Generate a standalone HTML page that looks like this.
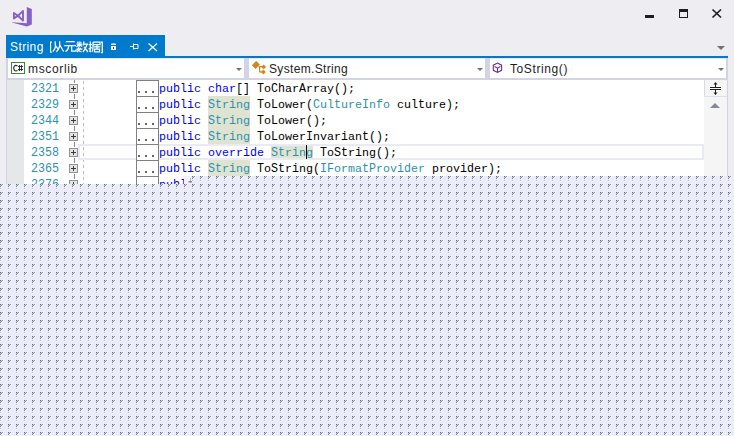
<!DOCTYPE html>
<html><head><meta charset="utf-8">
<style>
*{margin:0;padding:0;box-sizing:border-box}
html,body{width:734px;height:436px;overflow:hidden;background:#EEEEF2;font-family:"Liberation Sans",sans-serif}
.a{position:absolute}
.ui{font-family:"Liberation Sans",sans-serif;font-size:12px;line-height:14px;white-space:pre}
.code{font-family:"Liberation Mono",monospace;font-size:11.67px;line-height:16px;height:16px;white-space:pre;color:#000;}
.u{display:inline-block;font-weight:normal;transform:scaleY(1.03);transform-origin:0 11px}
.k{color:#0000FF}
.t{color:#2B91AF}
.ln{font-family:"Liberation Mono",monospace;font-size:11.67px;line-height:16px;height:16px;white-space:pre;color:#2B91AF;transform:scaleY(1.1);transform-origin:0 11px}
.ob{width:9px;height:9px;border:1px solid #919191;background:#E5E5E5}
.ob:before{content:"";position:absolute;left:1px;top:3px;width:5px;height:1px;background:#3A3A3A}
.ob:after{content:"";position:absolute;left:3px;top:1px;width:1px;height:5px;background:#3A3A3A}
.dots{width:23px;height:17px;border:1px solid #808080;background:#fff}
.dots i{position:absolute;top:10px;width:2px;height:2px;background:#666}
</style></head><body>
<!-- VS logo -->
<svg class="a" style="left:0;top:0" width="40" height="32">
<path d="M13.9,13 L18,15.7 L23,10.9 L23,20.6 L18,15.7 L13.9,18.4 Z" fill="none" stroke="#8661C5" stroke-width="1.9" stroke-linejoin="round"/>
<path d="M26.8,6.9 L31.8,9.1 L31.8,24.6 L26.8,26.4 L11.9,22.6 L12.2,22.3 L26.8,23.2 Z" fill="#8661C5"/>
</svg>
<!-- window buttons -->
<div class="a" style="left:645px;top:15px;width:9px;height:3px;background:#1E1E1E"></div>
<div class="a" style="left:679px;top:9px;width:9px;height:9px;border:1px solid #1E1E1E;border-top-width:3px"></div>
<svg class="a" style="left:710px;top:7px" width="14" height="12"><path d="M2.5,2.5 L11,10.5 M11,2.5 L2.5,10.5" stroke="#1E1E1E" stroke-width="1.7"/></svg>

<!-- tab -->
<div class="a" style="left:6px;top:35px;width:159px;height:21px;background:#007ACC"></div>
<div class="a ui" style="left:10px;top:40px;color:#fff;letter-spacing:0.4px">String</div>
<svg class="a" style="left:50px;top:39px" width="54" height="16" fill="none" stroke="#fff" stroke-width="1.25">
<path d="M1.8,3 L0.5,3 L0.5,13 L1.8,13"/>
<path d="M5.1,2.2 L5.4,8 Q4.6,11 2.8,12.5 M5.4,6.5 L7.9,9.9 M9.7,2.2 L9.7,7 Q8.7,10.5 6.4,12.8 M9.8,6 L13.6,12.5"/>
<path d="M15.8,2.6 L24.8,2.6 M14.3,6.6 L26,6.6 M18.75,6.6 Q18.5,11 15.4,12.5 M21.7,6.6 L21.7,12 L26,12 L26,10.5"/>
<path d="M29.2,2.5 L29.2,8 M26.5,5.2 L32,5.2 M27.2,2.8 L28,4 M31.2,2.8 L30.4,4 M29,5.5 L26.5,8 M29.4,5.5 L32,7.5 M26.5,10.2 L32.5,10.2 M29,8.2 L27.5,11 L31.5,13 M30.8,9 L27,13 M34,2.5 L33,6.5 M33.5,5 L38,5 M37,5.5 Q35.5,10 33,13 M34,8 L38,13"/>
<path d="M38.6,5.5 L42,5.5 M40.3,2.5 L40.3,12.5 L39.3,12 M38.6,10 L42,8.5 M43,3 L50,3 L50,5.5 L43,5.5 M43,3 L43,8 Q43,11 42,13 M44,7.8 L50.3,7.8 M47,5.5 L47,10 M44.5,10 L49.5,10 L49.5,12.8 L44.5,12.8 Z"/>
<path d="M51,3.2 L52.3,3.2 L52.3,13.5 L51,13.5"/>
</svg>
<!-- lock icon -->
<svg class="a" style="left:110px;top:43px" width="8" height="8"><path d="M1,2 L1,0.8 Q3.5,-0.3 6,0.8 L6,2 Z" fill="#F4E6CC"/><rect x="1" y="3" width="5" height="4" fill="#FAF2E2"/><rect x="3" y="4" width="1" height="2" fill="#2A3FB0"/></svg>
<!-- pin icon -->
<svg class="a" style="left:130px;top:43px" width="10" height="8" fill="none" stroke="#fff" stroke-width="1"><path d="M0,3.5 L3.5,3.5 M3.5,0.5 L3.5,6.5 M3.5,1.5 L8,1.5 L8,5.5 L3.5,5.5" /></svg>
<!-- close icon -->
<svg class="a" style="left:147px;top:42px" width="12" height="10"><path d="M1.5,1.5 L10,9 M10,1.5 L1.5,9" stroke="#fff" stroke-width="1.2"/></svg>
<!-- tab dropdown arrow -->
<svg class="a" style="left:716px;top:45px" width="10" height="6"><path d="M1,1 L9,1 L5,5 Z" fill="#717171"/></svg>
<!-- blue line -->
<div class="a" style="left:6px;top:56px;width:722px;height:2px;background:#007ACC"></div>

<!-- nav bar -->
<div class="a" style="left:6px;top:58px;width:722px;height:22px;background:#D3D4E3"></div>
<div class="a" style="left:8px;top:58px;width:236px;height:20px;background:#fff;border-top:1px solid #E8E8EE"></div>
<div class="a" style="left:249px;top:58px;width:236px;height:20px;background:#fff;border-top:1px solid #E8E8EE"></div>
<div class="a" style="left:490px;top:58px;width:236px;height:20px;background:#fff;border-top:1px solid #E8E8EE"></div>
<!-- c# icon -->
<div class="a" style="left:11px;top:62px;width:14px;height:12px;border:1px solid #388A34;background:#fff"></div>
<svg class="a" style="left:0;top:54px" width="30" height="24" fill="none" stroke="#333" stroke-width="1.1"><path d="M17.4,12.2 A2.2,2.8 0 1 0 17.4,16.2" stroke-width="1.2"/><path d="M19.5,11 L19.5,17 M21.5,11 L21.5,17 M18,12.5 L23,12.5 M18,15.5 L23,15.5" stroke-width="1"/></svg>
<div class="a ui" style="left:28px;top:62px;color:#1E1E1E;letter-spacing:0.65px">mscorlib</div>
<svg class="a" style="left:235px;top:67px" width="8" height="5"><path d="M1,1 L7,1 L4,4 Z" fill="#717171"/></svg>
<!-- class icon -->
<svg class="a" style="left:249px;top:58px" width="20" height="20"><g fill="#D4861A"><path d="M7.2,2.9 L10.9,6.6 L6.6,10.9 L2.9,7.2 Z"/><path d="M14.7,6.5 L17.1,8.9 L14.7,11.3 L12.3,8.9 Z"/><path d="M14.4,11.6 L16.8,14 L14.4,16.4 L12,14 Z"/></g><path d="M9.5,8.7 L13.5,8.7 M10.6,8.7 L10.6,13.8 L13.5,13.8" fill="none" stroke="#D4861A" stroke-width="1.2"/></svg>
<div class="a ui" style="left:269px;top:62px;color:#1E1E1E;letter-spacing:0.33px">System.String</div>
<svg class="a" style="left:476px;top:67px" width="8" height="5"><path d="M1,1 L7,1 L4,4 Z" fill="#717171"/></svg>
<!-- method icon -->
<svg class="a" style="left:492px;top:62px" width="12" height="12" fill="none" stroke="#6A2C91" stroke-width="1.1"><path d="M5.5,1 L9.6,3.2 L9.6,8.3 L5.5,10.5 L1.3,8.3 L1.3,3.2 Z M2.6,4.5 L5.5,6.2 L8.4,4.5 M5.5,6.2 L5.5,10.5"/></svg>
<div class="a ui" style="left:510px;top:62px;color:#1E1E1E;letter-spacing:0.6px">ToString()</div>
<svg class="a" style="left:717px;top:67px" width="8" height="5"><path d="M1,1 L7,1 L4,4 Z" fill="#717171"/></svg>

<!-- code area -->
<div class="a" style="left:6px;top:80px;width:698px;height:356px;background:#fff"></div>
<div class="a" style="left:6px;top:80px;width:1px;height:356px;background:#D3D4E3"></div>
<div class="a" style="left:7px;top:80px;width:17px;height:356px;background:#E6E7E8"></div>
<!-- outlining lines -->
<div class="a" style="left:74px;top:80px;width:1px;height:3px;background:#8C8C8C"></div>
<div class="a" style="left:74px;top:94px;width:1px;height:5px;background:#8C8C8C"></div>
<div class="a" style="left:74px;top:110px;width:1px;height:5px;background:#8C8C8C"></div>
<div class="a" style="left:74px;top:126px;width:1px;height:5px;background:#8C8C8C"></div>
<div class="a" style="left:74px;top:142px;width:1px;height:5px;background:#8C8C8C"></div>
<div class="a" style="left:74px;top:158px;width:1px;height:5px;background:#8C8C8C"></div>
<div class="a" style="left:74px;top:174px;width:1px;height:5px;background:#8C8C8C"></div>
<div class="a" style="left:83px;top:80px;width:1px;height:112px;background:repeating-linear-gradient(to bottom,transparent 0,transparent 1px,#BEBEBE 1px,#BEBEBE 4px,transparent 4px,transparent 6px)"></div>

<div class="a" style="left:208px;top:96px;width:42px;height:16px;background:#DFE3D1"></div>
<div class="a" style="left:208px;top:112px;width:42px;height:16px;background:#DFE3D1"></div>
<div class="a" style="left:208px;top:128px;width:42px;height:16px;background:#DFE3D1"></div>
<div class="a" style="left:271px;top:144px;width:42px;height:16px;background:#DFE3D1"></div>
<div class="a" style="left:208px;top:160px;width:42px;height:16px;background:#DFE3D1"></div>
<div class="a" style="left:208px;top:176px;width:42px;height:16px;background:#DFE3D1"></div>
<div class="a" style="left:78px;top:144px;width:626px;height:16px;border:2px solid #EAEAF2"></div>
<div class="a code" style="left:159px;top:81px"><span class="k">pu<b class="u">b</b><b class="u">l</b><b class="u">i</b>c</span> <span class="k">c<b class="u">h</b>ar</span><b class="u">[</b><b class="u">]</b> <b class="u">T</b>o<b class="u">C</b><b class="u">h</b>ar<b class="u">A</b>rray<b class="u">(</b><b class="u">)</b>;</div>
<div class="a ln" style="left:31px;top:81px">2321</div>
<div class="a ob" style="left:69px;top:84px"></div>
<div class="a dots" style="left:136px;top:80px"><i style="left:1px"></i><i style="left:8px"></i><i style="left:15px"></i></div>
<div class="a code" style="left:159px;top:97px"><span class="k">pu<b class="u">b</b><b class="u">l</b><b class="u">i</b>c</span> <span class="t"><b class="u">S</b><b class="u">t</b>r<b class="u">i</b>ng</span> <b class="u">T</b>o<b class="u">L</b>ower<b class="u">(</b><span class="t"><b class="u">C</b>u<b class="u">l</b><b class="u">t</b>ure<b class="u">I</b>n<b class="u">f</b>o</span> cu<b class="u">l</b><b class="u">t</b>ure<b class="u">)</b>;</div>
<div class="a ln" style="left:31px;top:97px">2329</div>
<div class="a ob" style="left:69px;top:100px"></div>
<div class="a dots" style="left:136px;top:96px"><i style="left:1px"></i><i style="left:8px"></i><i style="left:15px"></i></div>
<div class="a code" style="left:159px;top:113px"><span class="k">pu<b class="u">b</b><b class="u">l</b><b class="u">i</b>c</span> <span class="t"><b class="u">S</b><b class="u">t</b>r<b class="u">i</b>ng</span> <b class="u">T</b>o<b class="u">L</b>ower<b class="u">(</b><b class="u">)</b>;</div>
<div class="a ln" style="left:31px;top:113px">2344</div>
<div class="a ob" style="left:69px;top:116px"></div>
<div class="a dots" style="left:136px;top:112px"><i style="left:1px"></i><i style="left:8px"></i><i style="left:15px"></i></div>
<div class="a code" style="left:159px;top:129px"><span class="k">pu<b class="u">b</b><b class="u">l</b><b class="u">i</b>c</span> <span class="t"><b class="u">S</b><b class="u">t</b>r<b class="u">i</b>ng</span> <b class="u">T</b>o<b class="u">L</b>ower<b class="u">I</b>nvar<b class="u">i</b>an<b class="u">t</b><b class="u">(</b><b class="u">)</b>;</div>
<div class="a ln" style="left:31px;top:129px">2351</div>
<div class="a ob" style="left:69px;top:132px"></div>
<div class="a dots" style="left:136px;top:128px"><i style="left:1px"></i><i style="left:8px"></i><i style="left:15px"></i></div>
<div class="a code" style="left:159px;top:145px"><span class="k">pu<b class="u">b</b><b class="u">l</b><b class="u">i</b>c</span> <span class="k">overr<b class="u">i</b><b class="u">d</b>e</span> <span class="t"><b class="u">S</b><b class="u">t</b>r<b class="u">i</b>ng</span> <b class="u">T</b>o<b class="u">S</b><b class="u">t</b>r<b class="u">i</b>ng<b class="u">(</b><b class="u">)</b>;</div>
<div class="a ln" style="left:31px;top:145px">2358</div>
<div class="a ob" style="left:69px;top:148px"></div>
<div class="a dots" style="left:136px;top:144px"><i style="left:1px"></i><i style="left:8px"></i><i style="left:15px"></i></div>
<div class="a code" style="left:159px;top:161px"><span class="k">pu<b class="u">b</b><b class="u">l</b><b class="u">i</b>c</span> <span class="t"><b class="u">S</b><b class="u">t</b>r<b class="u">i</b>ng</span> <b class="u">T</b>o<b class="u">S</b><b class="u">t</b>r<b class="u">i</b>ng<b class="u">(</b><span class="t"><b class="u">I</b><b class="u">F</b>orma<b class="u">t</b><b class="u">P</b>rov<b class="u">i</b><b class="u">d</b>er</span> prov<b class="u">i</b><b class="u">d</b>er<b class="u">)</b>;</div>
<div class="a ln" style="left:31px;top:161px">2365</div>
<div class="a ob" style="left:69px;top:164px"></div>
<div class="a dots" style="left:136px;top:160px"><i style="left:1px"></i><i style="left:8px"></i><i style="left:15px"></i></div>
<div class="a code" style="left:159px;top:177px"><span class="k">pu<b class="u">b</b><b class="u">l</b><b class="u">i</b>c</span> <span class="t"><b class="u">S</b><b class="u">t</b>r<b class="u">i</b>ng</span> <b class="u">T</b>o<b class="u">U</b>pper<b class="u">(</b><b class="u">)</b>;</div>
<div class="a ln" style="left:31px;top:177px">2376</div>
<div class="a ob" style="left:69px;top:180px"></div>
<div class="a dots" style="left:136px;top:176px"><i style="left:1px"></i><i style="left:8px"></i><i style="left:15px"></i></div>
<!-- caret -->
<div class="a" style="left:306px;top:145px;width:1px;height:14px;background:#000"></div>

<!-- scrollbar -->
<div class="a" style="left:704px;top:80px;width:23px;height:356px;background:#F5F5F5"></div>
<div class="a" style="left:727px;top:58px;width:1px;height:378px;background:#D3D4E3"></div>
<div class="a" style="left:704px;top:80px;width:23px;height:17px;background:#F5F5F5;border-left:1px solid #DADAE5;border-bottom:1px solid #E0E0E8"></div>
<svg class="a" style="left:705px;top:80px" width="22" height="17" fill="none" stroke="#1E1E1E" stroke-width="1"><path d="M5,7.5 L16,7.5 M5,9.5 L16,9.5 M10.5,3 L10.5,7 M10.5,10 L10.5,14.5"/><path d="M8.5,4.5 L10.5,2 L12.5,4.5 Z M8.5,12.5 L10.5,15 L12.5,12.5 Z" fill="#1E1E1E" stroke="none"/></svg>
<svg class="a" style="left:709px;top:101px" width="13" height="8"><path d="M1,7 L11,7 L6,2 Z" fill="#868999"/></svg>

<!-- dotted overlay -->
<svg class="a" style="left:0;top:176px" width="734" height="260">
<defs><pattern id="p" x="0" y="0" width="8" height="8" patternUnits="userSpaceOnUse">
<rect width="8" height="8" fill="#ECEAFF"/>
<rect x="0" y="0" width="1" height="1" fill="#16A816"/>
<rect x="1" y="0" width="1" height="1" fill="#EBB8EE"/>
<rect x="2" y="0" width="1" height="1" fill="#7FA88E"/>
<rect x="3" y="0" width="1" height="1" fill="#FAF8FF"/>
<rect x="4" y="0" width="1" height="1" fill="#D3F1E4"/>
<rect x="6" y="0" width="1" height="1" fill="#E3EEFF"/>
<rect x="0" y="1" width="1" height="1" fill="#EAA2EC"/>
<rect x="1" y="1" width="1" height="1" fill="#A287CF"/>
<rect x="2" y="1" width="1" height="1" fill="#FAF8FF"/>
<rect x="3" y="1" width="1" height="1" fill="#E2EEFF"/>
<rect x="5" y="1" width="1" height="1" fill="#F3F1FF"/>
<rect x="0" y="2" width="1" height="1" fill="#639E79"/>
<rect x="1" y="2" width="1" height="1" fill="#FAF8FF"/>
<rect x="2" y="2" width="1" height="1" fill="#E6F6F8"/>
<rect x="4" y="2" width="1" height="1" fill="#E4EEFF"/>
<rect x="1" y="3" width="1" height="1" fill="#F3F1FF"/>
<rect x="3" y="3" width="1" height="1" fill="#F3F1FF"/>
<rect x="0" y="4" width="1" height="1" fill="#A3C5B4"/>
<rect x="2" y="4" width="1" height="1" fill="#F3F1FF"/>
<rect x="0" y="5" width="1" height="1" fill="#FAF6FF"/>
<rect x="0" y="6" width="1" height="1" fill="#E0ECFF"/>
<rect x="5" y="5" width="1" height="1" fill="#F3F1FF"/>
<rect x="6" y="3" width="1" height="1" fill="#F3F1FF"/>
<rect x="4" y="6" width="1" height="1" fill="#F3F1FF"/>
<rect x="1" y="7" width="1" height="1" fill="#F4E6FF"/>
</pattern></defs>
<path d="M0,8 L184,8 L184,0 L734,0 L734,260 L0,260 Z" fill="url(#p)"/>
</svg>
<div class="a" style="left:184px;top:176px;width:8px;height:8px;background:#F2F0FF"></div>
<svg class="a" style="left:186px;top:177px" width="7" height="7"><path d="M1.5,5 L5.5,5.5 L5.5,4 Z" fill="#222"/><path d="M4.5,1 L4.5,4.5" stroke="#B8B8D0" stroke-width="1"/></svg>
</body></html>
